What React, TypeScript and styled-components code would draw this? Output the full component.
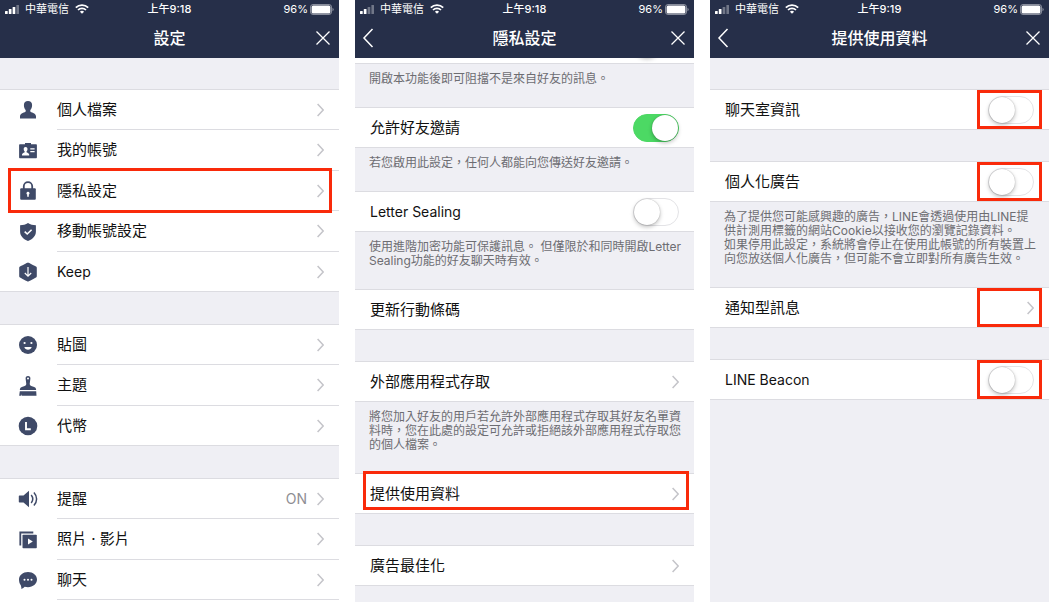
import React from "react";
import styled, { createGlobalStyle, css } from "styled-components";

const NAVY = "#262f49";
const ICON = "#3f4a68";
const PAPER = "#efeff4";
const LINE = "#dcdce1";
const RED = "#f92a0a";

const GlobalStyle = createGlobalStyle`
  *, *::before, *::after { box-sizing: border-box; }
  body {
    margin: 0;
    background: #fff;
    color: #111;
    font-family: Inter, "Noto Sans CJK TC", sans-serif;
    font-size: 15px;
    line-height: 20px;
  }
`;

const Page = styled.main`
  display: grid;
  grid-template-columns: repeat(3, minmax(0, 1fr));
  gap: 16px;
  min-height: 100vh;
`;

const Screen = styled.section`
  display: flex;
  flex-direction: column;
  background: ${PAPER};
`;

const Header = styled.header`
  background: ${NAVY};
  color: #fff;
`;

const StatusBar = styled.div`
  display: grid;
  grid-template-columns: 1fr auto 1fr;
  align-items: center;
  height: 18px;
  padding: 0 5px;
  font-size: 11px;
  line-height: 18px;
`;

const StatusSide = styled.div<{ $end?: boolean }>`
  display: flex;
  align-items: center;
  gap: ${(p) => (p.$end ? 2 : 6)}px;
  justify-content: ${(p) => (p.$end ? "flex-end" : "flex-start")};
`;

const Time = styled.time`
  font-weight: 500;
`;

const TitleBar = styled.div`
  display: grid;
  grid-template-columns: 32px 1fr 32px;
  align-items: center;
  height: 40px;
`;

const Title = styled.h1`
  grid-column: 2;
  margin: 0;
  font-size: 16px;
  font-weight: 500;
  text-align: center;
`;

const NavButton = styled.button`
  display: flex;
  align-items: center;
  justify-content: center;
  height: 40px;
  padding: 0;
  border: 0;
  background: none;
  color: #fff;
`;

const Group = styled.ul<{ $gap?: number; $open?: boolean }>`
  margin: ${(p) => p.$gap ?? 0}px 0 0;
  padding: 0;
  list-style: none;
  background: #fff;
  border-top: 1px solid ${LINE};
  ${(p) => p.$open && "flex: 1;"}
`;

const Item = styled.li<{ $full?: boolean }>`
  position: relative;
  height: 40px;
  &:nth-child(even) { height: 41px; }
  ${(p) => p.$full && `border-bottom: 1px solid ${LINE};`}
`;

const rowStyle = css`
  display: flex;
  align-items: center;
  height: 100%;
  color: inherit;
  text-decoration: none;
`;

const LinkRow = styled.a`${rowStyle}`;
const SwitchRow = styled.label`${rowStyle}`;

const IconSlot = styled.span`
  display: flex;
  width: 57px;
  padding-left: 18px;
`;

const RowBody = styled.span<{ $line?: boolean; $indent?: boolean }>`
  display: flex;
  flex: 1;
  align-items: center;
  gap: 10px;
  height: 100%;
  padding: 0 15px 0 ${(p) => (p.$indent ? 15 : 0)}px;
  ${(p) => p.$line && `border-bottom: 1px solid ${LINE};`}
`;

const Label = styled.span<{ $latin?: boolean }>`
  flex: 1;
  font-size: ${(p) => (p.$latin ? 14 : 15)}px;
`;

const Value = styled.span`
  color: #8e8e93;
  font-size: 14px;
`;

const Note = styled.p`
  margin: 0;
  padding: 8px 12px 21px 14px;
  color: #6d6d72;
  font-size: 12px;
  line-height: 14px;
`;

const ScrolledRow = styled.div`
  display: flex;
  align-items: flex-end;
  justify-content: flex-end;
  height: 6px;
  padding: 0 15px 5px;
  overflow: hidden;
  background: #fff;
  border-bottom: 1px solid ${LINE};
`;

const Switch = styled.input.attrs({ type: "checkbox", role: "switch" })`
  position: relative;
  appearance: none;
  flex: none;
  width: 46px;
  height: 28px;
  margin: 0;
  border: 1px solid #e3e3e6;
  border-radius: 14px;
  background: #fff;
  &::before {
    content: "";
    position: absolute;
    top: 0;
    left: 0;
    width: 26px;
    height: 26px;
    border-radius: 50%;
    background: #fff;
    box-shadow: 0 0 1px rgba(0, 0, 0, 0.35), 0 2px 4px rgba(0, 0, 0, 0.25);
  }
  &:checked {
    border-color: #4cd964;
    background: #4cd964;
  }
  &:checked::before {
    left: auto;
    right: 0;
  }
`;

const Highlight = styled.span<{ $area: "indented" | "row" | "control" }>`
  position: absolute;
  border: 3px solid ${RED};
  pointer-events: none;
  ${(p) => p.$area === "indented" && "inset: -3px 7px -2px 8px;"}
  ${(p) => p.$area === "row" && "inset: -3px 5px 3px 8px;"}
  ${(p) => p.$area === "control" && "inset: 0 7px 0 auto; width: 65px;"}
`;

const Chevron = () => (
  <svg width="7" height="14" viewBox="0 0 7 14" fill="none" stroke="#c4c4c9" strokeWidth="1.5" aria-hidden="true">
    <path d="M.6 1l5.600 6-5.600 6" />
  </svg>
);

const Signal = ({ bars }: { bars: number }) => (
  <svg width="14" height="9" viewBox="0 0 14 9" fill="#fff" aria-hidden="true">
    {[3, 5, 7, 9].map((h, i) => (
      <rect key={h} x={i * 3.8} y={9 - h} width="2.7" height={h} rx=".5" opacity={i < bars ? 1 : 0.35} />
    ))}
  </svg>
);

const Wifi = () => (
  <svg width="14" height="10" viewBox="0 0 14 10" fill="none" stroke="#fff" strokeWidth="1.7" aria-hidden="true">
    <path d="M.8 3.6a8.8 8.8 0 0 1 12.4 0M3 6a5.7 5.7 0 0 1 8 0" />
    <path d="M7 9.8L4.9 7.7a3 3 0 0 1 4.2 0z" fill="#fff" stroke="none" />
  </svg>
);

const Battery = () => (
  <svg width="24" height="11" viewBox="0 0 24 11" aria-hidden="true">
    <rect x=".5" y=".5" width="21" height="10" rx="2.5" fill="none" stroke="#fff" strokeOpacity=".45" />
    <rect x="1.6" y="1.6" width="18.8" height="7.8" rx="1.5" fill="#fff" />
    <path d="M22.5 3.7a2 2 0 0 1 0 3.6z" fill="#fff" opacity=".5" />
  </svg>
);

const ICONS: Record<string, React.ReactNode> = {
  profile: (
    <path d="M10 1c2.500 0 4.100 1.500 4.100 3.900 0 2.300-.8 4.100-1.800 5.100v1.500c.3.900 5.700 1.600 5.700 4.700v2.300H2v-2.300c0-3.100 5.400-3.800 5.700-4.700V10c-1-1-1.800-2.800-1.800-5.100C5.900 2.500 7.500 1 10 1z" />
  ),
  account: (
    <>
      <path d="M2.100 3.300H7V2h6v1.300h4.900c.6 0 1 .4 1 1v12c0 .6-.4 1-1 1H2.100c-.6 0-1-.4-1-1v-12c0-.6.4-1 1-1z" />
      <path fill="#fff" d="M7.600 6c1.200 0 1.900.8 1.900 2s-.4 1.900-1 2.500v.8c.3.5 2.700.8 2.700 2.300v.8H4v-.8c0-1.500 2.400-1.800 2.700-2.300v-.8c-.6-.6-1-1.300-1-2.500s.7-2 1.900-2zM12.300 7.200h4.300v1.300h-4.300zM12.300 10h4.300v1.300h-4.300z" />
    </>
  ),
  lock: (
    <>
      <path d="M5.800 8.500V5.300a4.200 4.200 0 0 1 8.400 0v3.200" fill="none" stroke={ICON} strokeWidth="1.800" />
      <rect x="2.200" y="7.300" width="15.600" height="11.500" rx="1" />
      <path fill="#fff" d="M10 10.800a1.500 1.500 0 0 1 .8 2.800v2.200H9.200v-2.200a1.500 1.500 0 0 1 .8-2.800z" />
    </>
  ),
  shield: (
    <>
      <path d="M10 1c2.300 1.600 4.900 2.200 7.900 2.300v6.200c0 4.500-3.400 7.700-7.900 9.500-4.500-1.800-7.900-5-7.900-9.500V3.300C5.100 3.200 7.700 2.600 10 1z" />
      <path d="M6.700 9.600l2.500 2.400 4.400-4.300" fill="none" stroke="#fff" strokeWidth="1.600" />
    </>
  ),
  keep: (
    <>
      <path d="M10 .5c.4 0 7.500 3.700 8 4.100.5.300.8.600.8 1.200v8.400c0 .6-.3.900-.8 1.200-.5.400-7.600 4.100-8 4.100s-7.500-3.700-8-4.100c-.5-.3-.8-.6-.8-1.200V5.800c0-.6.300-.9.800-1.200.5-.4 7.600-4.100 8-4.100z" />
      <path d="M10 5v9M6.800 11l3.200 3.200 3.200-3.200" fill="none" stroke="#fff" strokeWidth="1.200" />
    </>
  ),
  sticker: (
    <>
      <circle cx="10" cy="10" r="9" />
      <circle cx="6.600" cy="8" r="1.100" fill="#fff" />
      <circle cx="13.400" cy="8" r="1.100" fill="#fff" />
      <path d="M6.300 12h7.400c-.5 1.700-1.900 2.700-3.700 2.700S6.800 13.700 6.300 12z" fill="#fff" />
    </>
  ),
  theme: (
    <>
      <path fillRule="evenodd" d="M10 0c1.700 0 2.500 1.100 2.400 2.400L11.700 8c.1 1.600 1.500 2.300 3.800 2.800 1.800.4 2.500 1.300 2.700 3.200H1.800c.2-1.900.9-2.800 2.700-3.200C6.800 10.300 8.200 9.600 8.300 8l-.7-5.600C7.500 1.100 8.300 0 10 0zm0 1.500a1 1 0 1 0 0 2 1 1 0 0 0 0-2z" />
      <path d="M1.800 15.200h16.400l.3 4.600H3.500l.3-1.500-1 1.500H1.200z" />
    </>
  ),
  coin: (
    <>
      <circle cx="10" cy="10" r="9.300" />
      <path d="M8 6v7.300h4.800" fill="none" stroke="#fff" strokeWidth="1.900" />
    </>
  ),
  sound: (
    <>
      <path d="M1.500 6.500h4l5.500-4.700v16.400l-5.500-4.700h-4c-.4 0-.7-.3-.7-.7V7.200c0-.4.300-.7.700-.7z" />
      <path d="M13.200 6c1.900 2.400 1.900 5.600 0 8M15.900 3.500c3.600 3.900 3.600 9.100 0 13" fill="none" stroke={ICON} strokeWidth="1.500" />
    </>
  ),
  media: (
    <>
      <path d="M2.300 15.500V2.500h13" fill="none" stroke={ICON} strokeWidth="1.800" />
      <rect x="4.500" y="4.700" width="14.300" height="13.600" rx=".8" />
      <path d="M10 8.400l4.800 3.100-4.800 3.100z" fill="#fff" />
    </>
  ),
  chat: (
    <>
      <path d="M10 2c5 0 9 3.300 9 7.600s-4 7.600-9 7.600c-1.200 0-2.300-.1-3.300-.4-.8.900-1.900 1.700-3.300 2.200.1-1.200-.1-2.400-.6-3.700C1.600 13.900 1 11.800 1 9.600 1 5.300 5 2 10 2z" />
      <circle cx="6.500" cy="9.700" r="1" fill="#fff" />
      <circle cx="10" cy="9.700" r="1" fill="#fff" />
      <circle cx="13.500" cy="9.700" r="1" fill="#fff" />
    </>
  ),
};

const RowIcon = ({ name }: { name: string }) => (
  <svg width="20" height="20" viewBox="0 0 20 20" fill={ICON} aria-hidden="true">
    {ICONS[name]}
  </svg>
);

interface TopProps {
  title: string;
  time: string;
  bars: number;
  back?: boolean;
}

const Top = ({ title, time, bars, back }: TopProps) => (
  <Header>
    <StatusBar>
      <StatusSide>
        <Signal bars={bars} />
        <span>中華電信</span>
        <Wifi />
      </StatusSide>
      <Time>上午{time}</Time>
      <StatusSide $end>
        <span>96%</span>
        <Battery />
      </StatusSide>
    </StatusBar>
    <TitleBar>
      {back && (
        <NavButton type="button" aria-label="返回">
          <svg width="18" height="20" viewBox="0 0 18 20" fill="none" stroke="#fff" strokeWidth="1.500">
            <path d="M10.500 1l-8.500 9 8.500 9" />
          </svg>
        </NavButton>
      )}
      <Title>{title}</Title>
      <NavButton type="button" aria-label="關閉">
        <svg width="14" height="14" viewBox="0 0 14 14" fill="none" stroke="#fff" strokeWidth="1.300">
          <path d="M.5.5l13 13M13.500.5l-13 13" />
        </svg>
      </NavButton>
    </TitleBar>
  </Header>
);

interface MenuEntry {
  icon: string;
  label: string;
  latin?: boolean;
  value?: string;
  marked?: boolean;
}

const MENU: MenuEntry[][] = [
  [
    { icon: "profile", label: "個人檔案" },
    { icon: "account", label: "我的帳號" },
    { icon: "lock", label: "隱私設定", marked: true },
    { icon: "shield", label: "移動帳號設定" },
    { icon: "keep", label: "Keep", latin: true },
  ],
  [
    { icon: "sticker", label: "貼圖" },
    { icon: "theme", label: "主題" },
    { icon: "coin", label: "代幣" },
  ],
  [
    { icon: "sound", label: "提醒", value: "ON" },
    { icon: "media", label: "照片 · 影片" },
    { icon: "chat", label: "聊天" },
  ],
];

interface SettingProps {
  label: string;
  latin?: boolean;
  gap?: boolean;
  toggle?: "on" | "off";
  chevron?: boolean;
  mark?: "row" | "control";
}

const Setting = ({ label, latin, gap, toggle, chevron, mark }: SettingProps) => (
  <Group $gap={gap ? 31 : 0}>
    <Item $full>
      {toggle ? (
        <SwitchRow>
          <RowBody $indent>
            <Label $latin={latin}>{label}</Label>
            <Switch defaultChecked={toggle === "on"} />
          </RowBody>
        </SwitchRow>
      ) : (
        <LinkRow href="#">
          <RowBody $indent>
            <Label $latin={latin}>{label}</Label>
            {chevron && <Chevron />}
          </RowBody>
        </LinkRow>
      )}
      {mark && <Highlight $area={mark} />}
    </Item>
  </Group>
);

export default function App() {
  return (
    <>
      <GlobalStyle />
      <Page lang="zh-Hant">
        <Screen>
          <Top title="設定" time="9:18" bars={3} />
          {MENU.map((group, g) => {
            const open = g === MENU.length - 1;
            return (
              <Group key={g} $gap={g === 0 ? 31 : 32} $open={open}>
                {group.map((row, i) => {
                  const full = !open && i === group.length - 1;
                  return (
                    <Item key={row.label} $full={full}>
                      <LinkRow href="#">
                        <IconSlot>
                          <RowIcon name={row.icon} />
                        </IconSlot>
                        <RowBody $line={!full}>
                          <Label $latin={row.latin}>{row.label}</Label>
                          {row.value && <Value>{row.value}</Value>}
                          <Chevron />
                        </RowBody>
                      </LinkRow>
                      {row.marked && <Highlight $area="indented" />}
                    </Item>
                  );
                })}
              </Group>
            );
          })}
        </Screen>

        <Screen>
          <Top title="隱私設定" time="9:18" bars={2} back />
          <ScrolledRow>
            <Switch aria-label="阻擋訊息" />
          </ScrolledRow>
          <Note>開啟本功能後即可阻擋不是來自好友的訊息。</Note>
          <Setting label="允許好友邀請" toggle="on" />
          <Note>若您啟用此設定，任何人都能向您傳送好友邀請。</Note>
          <Setting label="Letter Sealing" latin toggle="off" />
          <Note>使用進階加密功能可保護訊息。 但僅限於和同時開啟Letter Sealing功能的好友聊天時有效。</Note>
          <Setting label="更新行動條碼" />
          <Setting label="外部應用程式存取" gap chevron />
          <Note>將您加入好友的用戶若允許外部應用程式存取其好友名單資料時，您在此處的設定可允許或拒絕該外部應用程式存取您的個人檔案。</Note>
          <Setting label="提供使用資料" chevron mark="row" />
          <Setting label="廣告最佳化" gap chevron />
        </Screen>

        <Screen>
          <Top title="提供使用資料" time="9:19" bars={2} back />
          <Setting label="聊天室資訊" gap toggle="off" mark="control" />
          <Setting label="個人化廣告" gap toggle="off" mark="control" />
          <Note>
            為了提供您可能感興趣的廣告，LINE會透過使用由LINE提供計測用標籤的網站Cookie以接收您的瀏覽記錄資料。
            <br />
            如果停用此設定，系統將會停止在使用此帳號的所有裝置上向您放送個人化廣告，但可能不會立即對所有廣告生效。
          </Note>
          <Setting label="通知型訊息" chevron mark="control" />
          <Setting label="LINE Beacon" latin gap toggle="off" mark="control" />
        </Screen>
      </Page>
    </>
  );
}
